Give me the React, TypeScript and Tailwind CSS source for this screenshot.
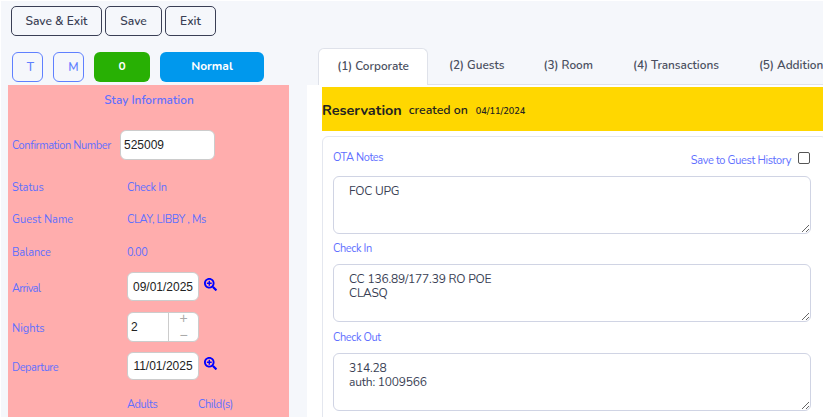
import React from "react";
import { FaSearchPlus } from "react-icons/fa";

const sans = "font-['Nunito','Noto_Sans',sans-serif]";
const label = "text-[11px] text-[#5f70ff]";
const arial = "font-['Liberation_Sans',sans-serif] text-[12px] text-[#222]";

function Row({ h, name, tight, children }: { h: string; name: string; tight?: string; children: React.ReactNode }) {
  return (
    <div className={`flex items-center ${h}`}>
      <div className={`w-[115px] shrink-0 ${label} ${tight ?? ""}`}>{name}</div>
      {children}
    </div>
  );
}

function DateField({ value, h, iconTop }: { value: string; h: string; iconTop: string }) {
  return (
    <div className="flex items-start">
      <div className={`flex ${h} w-[72px] items-center justify-center rounded-[6px] border border-[#ccc] bg-white ${arial}`}>
        {value}
      </div>
      <FaSearchPlus className={`ml-[5px] ${iconTop} text-[13px] text-[#0000ff]`} />
    </div>
  );
}

function Note({ title, text, className, gap }: { title: string; text: string; className?: string; gap: string }) {
  return (
    <div className={className}>
      <div className={`${label} leading-[15px] tracking-[-0.4px]`}>{title}</div>
      <textarea
        readOnly
        defaultValue={text}
        className={`${gap} block h-[58px] w-[478px] rounded-[6px] border border-[#d0d4e4] bg-white px-[15px] py-[7px] text-[12px] leading-[14px] tracking-[-0.2px] text-[#3a3f55] outline-none ${sans}`}
      />
    </div>
  );
}

export default function App() {
  const tabs = ["(2) Guests", "(3) Room", "(4) Transactions", "(5) Additional"];
  return (
    <div className={`flex h-[417px] w-[823px] overflow-hidden border-l border-t border-white bg-[#f5f7fb] ${sans}`}>
      <div className="w-[306px] shrink-0">
        <div className="flex gap-[3px] pl-[10px] pt-[5px]">
          {[
            ["Save & Exit", "w-[91px]"],
            ["Save", "w-[57px]"],
            ["Exit", "w-[51px]"],
          ].map(([t, w]) => (
            <button key={t} className={`h-[30px] ${w} rounded-[5px] border border-[#3a3f55] text-[12px] font-semibold text-[#3a3f55]`}>
              {t}
            </button>
          ))}
        </div>
        <div className="mt-[16px] flex h-[30px] pl-[11px] text-[12px] font-bold">
          <div className="flex w-[31px] items-center justify-center rounded-[6px] border border-[#5f80ff] pl-[6px] font-semibold text-[#5f80ff]">T</div>
          <div className="ml-[10px] flex w-[31px] items-center justify-center rounded-[6px] border border-[#5f80ff] pl-[10px] font-semibold text-[#5f80ff]">M</div>
          <div className="ml-[10px] flex w-[56px] items-center justify-center rounded-[6px] bg-[#28b004] pb-[2px] text-white">0</div>
          <div className="ml-[10px] flex w-[104px] items-center justify-center rounded-[6px] bg-[#0098ed] pb-[2px] text-white">Normal</div>
        </div>
        <div className="ml-[7px] mt-[3px] h-[340px] w-[281px] bg-[#ffadad] pl-[4px]">
          <div className="pr-[3px] pt-[7px] text-center text-[11.8px] font-semibold leading-[16px] text-[#5f70ff]">Stay Information</div>
          <div className="mt-[22px] flex h-[30px] items-center">
            <div className={`w-[108px] shrink-0 whitespace-nowrap pt-[2px] tracking-[-0.4px] ${label}`}>Confirmation Number</div>
            <div className={`flex h-[30px] w-[95px] items-center rounded-[6px] border border-[#ccc] bg-white pl-[3px] ${arial}`}>525009</div>
          </div>
          <Row h="mt-[20px] h-[16px]" name="Status"><span className={`${label} tracking-[-0.3px]`}>Check In</span></Row>
          <Row h="mt-[16px] h-[16px]" name="Guest Name"><span className={`${label} tracking-[-0.35px]`}>CLAY, LIBBY , Ms</span></Row>
          <Row h="mt-[17px] h-[16px]" name="Balance" tight="tracking-[-0.1px]"><span className={`${label} tracking-[-0.5px]`}>0.00</span></Row>
          <Row h="mt-[11px] h-[29px]" name="Arrival" tight="pt-[5px] tracking-[-0.7px]"><DateField value="09/01/2025" h="h-[29px]" iconTop="mt-[6px]" /></Row>
          <Row h="mt-[11px] h-[29px]" name="Nights" tight="pt-[5px]">
            <div className={`flex h-[30px] w-[72px] rounded-[6px] border border-[#ccc] bg-white ${arial}`}>
              <div className="flex w-[41px] items-center border-r border-[#ccc] pl-[3px]">2</div>
              <div className="flex flex-1 flex-col items-center justify-between text-[14px] leading-[11px] text-[#aaa]">
                <span>+</span>
                <span>−</span>
              </div>
            </div>
          </Row>
          <Row h="mt-[11px] h-[28px]" name="Departure" tight="pt-[4px] tracking-[-0.45px]"><DateField value="11/01/2025" h="h-[28px]" iconTop="mt-[5px]" /></Row>
          <div className={`mt-[17px] flex pl-[115px] tracking-[-0.4px] ${label}`}>
            <span className="w-[71px]">Adults</span>
            <span>Child(s)</span>
          </div>
        </div>
      </div>
      <div className="min-w-0 flex-1">
        <div className="h-[84px] overflow-hidden pl-[11px] pt-[47px]">
          <div className="flex h-[37px] w-[600px] border-b border-[#dfe2ea] text-[11.8px] font-semibold text-[#4a4f60]">
            <div className="flex h-[37px] w-[110px] items-center justify-center rounded-t-[6px] border border-b-0 border-[#dfe2ea] bg-white pb-[1px]">(1) Corporate</div>
            {tabs.map((t, i) => (
              <div key={t} className={`flex h-[36px] items-center whitespace-nowrap ${["ml-[21px]", "ml-[39px]", "ml-[40px]", "ml-[40px]"][i]}`}>{t}</div>
            ))}
          </div>
        </div>
        <div className="h-[332px] w-[520px] bg-white pl-[15px]">
          <div className="h-[2px]" />
          <div className="flex h-[44px] items-center bg-[#ffd700] pt-[3px] text-[#222]">
            <span className="text-[14.4px] font-bold">Reservation</span>
            <span className="ml-[7px] text-[12.3px] font-semibold">created on</span>
            <span className="ml-[8px] pt-[2px] text-[9.2px] font-semibold">04/11/2024</span>
          </div>
          <div className="mt-[5px] h-[290px] rounded-t-[6px] border border-[#e4e7ef] pl-[10px] pt-[13px]">
            <div className="relative w-[478px]">
              <Note title="OTA Notes" text="FOC UPG" gap="mt-[11px]" />
              <div className="absolute right-0 top-0 flex items-start justify-end">
                <span className={`${label} mt-[3px] leading-[15px] tracking-[-0.35px]`}>Save to Guest History</span>
                <span className="ml-[7px] mr-[1px] mt-[2px] h-[12px] w-[12px] rounded-[2px] border border-[#555] bg-white" />
              </div>
            </div>
            <Note className="mt-[7px]" title="Check In" text={"CC 136.89/177.39 RO POE\nCLASQ"} gap="mt-[8px]" />
            <Note className="mt-[8px]" title="Check Out" text={"314.28\nauth: 1009566"} gap="mt-[8px]" />
          </div>
        </div>
      </div>
    </div>
  );
}
